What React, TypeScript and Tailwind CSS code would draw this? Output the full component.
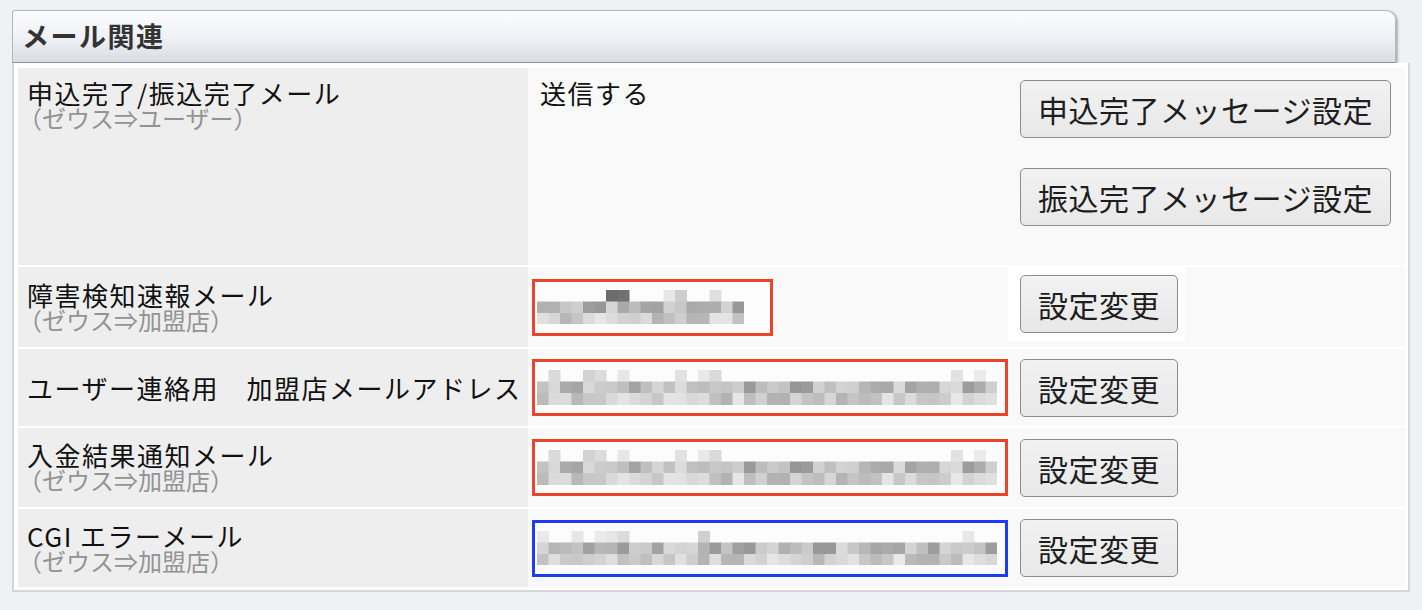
import React from "react";

type Cell = { x: number; y: number; v: number };

// pixelated address placeholder, deterministic per seed
function mosaic(seed: number, cols: number, darkTop: number[] = []): Cell[] {
  let s = seed;
  const rnd = () => {
    s = (s * 1103515245 + 12345) % 2147483648;
    return s / 2147483648;
  };
  const cells: Cell[] = [];
  for (let c = 0; c < cols; c++) {
    if (darkTop.includes(c)) cells.push({ x: c, y: 0, v: 90 + Math.round(rnd() * 40) });
    else if (rnd() < 0.22) cells.push({ x: c, y: 0, v: 205 + Math.round(rnd() * 30) });
    cells.push({ x: c, y: 1, v: 150 + Math.round(rnd() * 70) });
    cells.push({ x: c, y: 2, v: 178 + Math.round(rnd() * 55) });
  }
  return cells;
}

function Masked({ seed, cols, darkTop }: { seed: number; cols: number; darkTop?: number[] }) {
  const size = 11.5;
  const cells = mosaic(seed, cols, darkTop);
  return (
    <svg width={cols * size} height={size * 3} className="block">
      {cells.map((c, i) => (
        <rect
          key={i}
          x={c.x * size}
          y={c.y * size}
          width={size + 0.5}
          height={size + 0.5}
          fill={`rgb(${c.v},${c.v},${c.v})`}
        />
      ))}
    </svg>
  );
}

function AddrBox({ color, wide, seed }: { color: "red" | "blue"; wide?: boolean; seed: number }) {
  return (
    <div
      className={`h-[57px] border-[3px] bg-[#fcfcfc] flex items-center pl-[2px] ${
        wide ? "w-[476px]" : "w-[241px]"
      } ${color === "red" ? "border-[#e8452c]" : "border-[#1f3cf5]"}`}
    >
      {wide ? <Masked seed={seed} cols={40} /> : <Masked seed={seed} cols={18} darkTop={[6, 7]} />}
    </div>
  );
}

function Btn({ children }: { children: React.ReactNode }) {
  return (
    <button className="h-[58px] px-[17px] rounded-[5px] border-[1.5px] border-[#8c8c8c] bg-gradient-to-b from-[#f2f2f2] to-[#e8e8e8] text-[30px] tracking-[0.5px] leading-none text-[#1e1e1e] whitespace-nowrap">
      {children}
    </button>
  );
}

function Label({ title, sub }: { title: string; sub?: string }) {
  return (
    <div className="pl-[9px]">
      <div className="text-[26px] tracking-[1.5px] leading-[24px] text-[#111] whitespace-nowrap">{title}</div>
      {sub && <div className="-ml-[9px] text-[24px] leading-[25px] text-[#939393] whitespace-nowrap">{sub}</div>}
    </div>
  );
}

const rowBase = "grid grid-cols-[510px_480px_1fr] border-t-2 border-dotted border-white";

export default function App() {
  return (
    <div className="min-h-screen bg-[#f0f1f5] pt-[10px] pl-[12px] font-['Noto_Sans_CJK_JP',sans-serif]">
      <section className="w-[1398px]">
        {/* section header */}
        <div className="h-[53px] w-[1384px] rounded-tl-[3px] rounded-tr-[10px] border border-[#b3b6bd] border-b-[#8f9197] bg-gradient-to-b from-[#fcfdff] via-[#f0f2f6] to-[#d9dce2] shadow-[2px_1px_2px_rgba(0,0,0,0.25)] flex items-center pl-[9px]">
          <h2 className="text-[27px] font-bold tracking-[1.5px] text-[#333]">メール関連</h2>
        </div>

        {/* settings table */}
        <div className="border-2 border-t-0 border-[#d6d6d6] bg-white pt-[5px] pl-[4px] pr-[3px] pb-[3px]">
          {/* 申込完了/振込完了 */}
          <div className="grid grid-cols-[510px_480px_1fr] h-[197px]">
            <div className="bg-[#eeeeee] pt-[13px]">
              <Label title="申込完了/振込完了メール" sub="（ゼウス⇒ユーザー）" />
            </div>
            <div className="bg-[#f9f9f9] pt-[13px] pl-[12px]">
              <div className="text-[26px] tracking-[1.5px] leading-[24px] text-[#111]">送信する</div>
            </div>
            <div className="bg-[#f9f9f9] pt-[12px] pl-[12px] flex flex-col items-start gap-[30px]">
              <Btn>申込完了メッセージ設定</Btn>
              <Btn>振込完了メッセージ設定</Btn>
            </div>
          </div>

          {/* 障害検知速報 */}
          <div className={`${rowBase} h-[82px]`}>
            <div className="bg-[#eeeeee] flex items-center">
              <Label title="障害検知速報メール" sub="（ゼウス⇒加盟店）" />
            </div>
            <div className="bg-[#f9f9f9] flex items-center pl-[4px]">
              <AddrBox color="red" seed={11} />
            </div>
            <div className="bg-[#f9f9f9]">
              <div className="w-[177px] h-[74px] bg-white flex items-center pl-[12px]">
                <Btn>設定変更</Btn>
              </div>
            </div>
          </div>

          {/* 加盟店メールアドレス */}
          <div className={`${rowBase} h-[79px]`}>
            <div className="bg-[#eeeeee] flex items-center">
              <Label title="ユーザー連絡用　加盟店メールアドレス" />
            </div>
            <div className="bg-[#f9f9f9] flex items-center pl-[4px]">
              <AddrBox color="red" wide seed={23} />
            </div>
            <div className="bg-[#f9f9f9] flex items-center pl-[12px]">
              <Btn>設定変更</Btn>
            </div>
          </div>

          {/* 入金結果通知 */}
          <div className={`${rowBase} h-[81px]`}>
            <div className="bg-[#eeeeee] flex items-center">
              <Label title="入金結果通知メール" sub="（ゼウス⇒加盟店）" />
            </div>
            <div className="bg-[#f9f9f9] flex items-center pl-[4px]">
              <AddrBox color="red" wide seed={23} />
            </div>
            <div className="bg-[#f9f9f9] flex items-center pl-[12px]">
              <Btn>設定変更</Btn>
            </div>
          </div>

          {/* CGI エラー */}
          <div className={`${rowBase} h-[80px]`}>
            <div className="bg-[#eeeeee] flex items-center">
              <Label title="CGI エラーメール" sub="（ゼウス⇒加盟店）" />
            </div>
            <div className="bg-[#f9f9f9] flex items-center pl-[4px]">
              <AddrBox color="blue" wide seed={37} />
            </div>
            <div className="bg-[#f9f9f9] flex items-center pl-[12px]">
              <Btn>設定変更</Btn>
            </div>
          </div>
        </div>
      </section>
    </div>
  );
}
